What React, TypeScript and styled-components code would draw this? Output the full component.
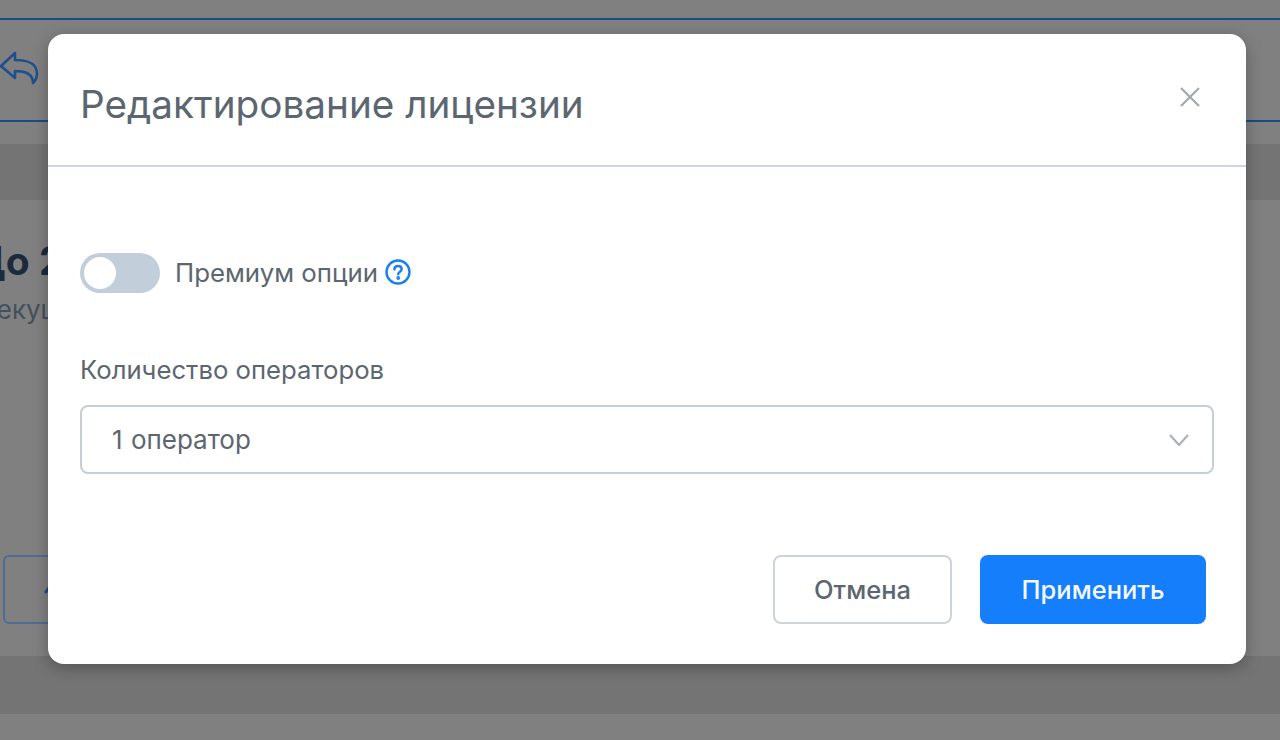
import styled, { createGlobalStyle } from "styled-components";

const GlobalStyle = createGlobalStyle`
  html, body {
    margin: 0;
    padding: 0;
    height: 740px;
    overflow: hidden;
    background: #808080;
    font-family: Inter, "Noto Sans", sans-serif;
  }
  * { box-sizing: border-box; }
`;

const Screen = styled.div`
  position: relative;
  width: 1280px;
  height: 740px;
  overflow: hidden;
  display: flex;
  flex-direction: column;
`;

/* page behind the dimmed overlay */
const TopArea = styled.div`
  height: 144px;
  padding-top: 18px;
  background: #808080;
`;

const NavBar = styled.div`
  height: 104px;
  display: flex;
  align-items: center;
  padding: 0 0 4px 0;
  border-top: 2px solid #1c4a85;
  border-bottom: 2px solid #1c4a85;
  color: #1f4f8c;
`;

const Band = styled.div<{ $h: number }>`
  height: ${(p) => p.$h}px;
  background: #747475;
`;

const PageCard = styled.div`
  height: 456px;
  background: #808080;
  padding: 38px 0 32px 3px;
  display: flex;
  flex-direction: column;
`;

const CardTitle = styled.div`
  margin-left: -31px;
  font-size: 39px;
  line-height: 46px;
  font-weight: 700;
  color: #1c2a3d;
  white-space: nowrap;
`;

const CardText = styled.div`
  margin: 12px 0 0 -21px;
  font-size: 26px;
  line-height: 28px;
  color: #44505e;
  white-space: nowrap;
`;

const OutlineButton = styled.div`
  margin-top: auto;
  width: 120px;
  height: 69px;
  border: 2px solid #4f6d94;
  border-radius: 6px;
  display: flex;
  align-items: center;
  padding-left: 39px;
  color: #1c4a85;
`;

const BottomArea = styled.div`
  flex: 1;
  background: #808080;
`;

/* modal */
const Overlay = styled.div`
  position: absolute;
  inset: 0;
  padding: 34px 34px 0 48px;
`;

const Modal = styled.div`
  width: 1198px;
  height: 630px;
  background: #fff;
  border-radius: 16px;
  box-shadow: 0 4px 16px rgba(0, 0, 0, 0.28);
  display: flex;
  flex-direction: column;
`;

const ModalHeader = styled.div`
  height: 133px;
  flex: none;
  display: flex;
  justify-content: space-between;
  padding: 46px 44px 0 32px;
  border-bottom: 2px solid #ced5dc;
`;

const Title = styled.h1`
  margin: 0;
  font-size: 38.7px;
  line-height: 48px;
  font-weight: 400;
  color: #5c6670;
`;

const CloseButton = styled.div`
  width: 24px;
  height: 24px;
  margin-top: 5px;
  color: #a3a8ad;
`;

const ModalBody = styled.div`
  flex: 1;
  display: flex;
  flex-direction: column;
  padding: 86px 32px 40px;
`;

const ToggleRow = styled.div`
  display: flex;
  align-items: center;
  height: 40px;
`;

const Toggle = styled.div`
  width: 80px;
  height: 40px;
  border-radius: 20px;
  background: #c3cedb;
  padding: 4px;
  margin-right: 15px;
`;

const ToggleKnob = styled.div`
  width: 32px;
  height: 32px;
  border-radius: 50%;
  background: #fff;
`;

const RowLabel = styled.span`
  font-size: 25.8px;
  line-height: 32px;
  color: #5c6670;
`;

const HelpIcon = styled.div`
  width: 26px;
  height: 26px;
  margin: 0 0 2px 7px;
  color: #1a7fef;
`;

const FieldLabel = styled.div`
  margin-top: 61px;
  font-size: 25.7px;
  line-height: 32px;
  color: #5c6670;
`;

const Select = styled.div`
  margin-top: 19px;
  width: 1134px;
  height: 69px;
  border: 2px solid #c6ced6;
  border-radius: 8px;
  display: flex;
  align-items: center;
  justify-content: space-between;
  padding: 0 23px 0 30px;
  font-size: 26px;
  word-spacing: 1px;
  color: #5c6670;
`;

const Chevron = styled.div`
  width: 20px;
  height: 12px;
  color: #a9aeb3;
  display: flex;
`;

const Actions = styled.div`
  margin-top: auto;
  padding-right: 8px;
  display: flex;
  justify-content: flex-end;
  gap: 28px;
`;

const Button = styled.button<{ $primary?: boolean }>`
  height: 69px;
  width: ${(p) => (p.$primary ? 226 : 179)}px;
  border-radius: 8px;
  border: ${(p) => (p.$primary ? "none" : "2px solid #cdd3d9")};
  background: ${(p) => (p.$primary ? "#157ffb" : "#fff")};
  color: ${(p) => (p.$primary ? "#f4f9ff" : "#5c6670")};
  font: 500 25.5px Inter, "Noto Sans", sans-serif;
  padding: 0;
`;

export default function App() {
  return (
    <Screen>
      <GlobalStyle />
      <TopArea>
        <NavBar>
          <svg width="40" height="36" viewBox="0 0 40 36" fill="none" stroke="currentColor" strokeWidth="2.6" strokeLinejoin="round" strokeLinecap="round">
            <path d="M1 16 L15 3 V10 C28 10 37 13 37 24 C37 28 36 30 33 33 C33 25 27 21 15 21 V28 Z" />
          </svg>
        </NavBar>
      </TopArea>
      <Band $h={56} />
      <PageCard>
        <CardTitle>До 2</CardTitle>
        <CardText>Текущая</CardText>
        <OutlineButton>
          <svg width="16" height="24" viewBox="0 0 16 24" fill="none" stroke="currentColor" strokeWidth="3" strokeLinecap="round">
            <path d="M2 14 L6 8" />
          </svg>
        </OutlineButton>
      </PageCard>
      <Band $h={58} />
      <BottomArea />
      <Overlay>
        <Modal>
          <ModalHeader>
            <Title>Редактирование лицензии</Title>
            <CloseButton>
              <svg width="24" height="24" viewBox="0 0 24 24" fill="none" stroke="currentColor" strokeWidth="2.2">
                <path d="M3 3 L21 21 M21 3 L3 21" />
              </svg>
            </CloseButton>
          </ModalHeader>
          <ModalBody>
            <ToggleRow>
              <Toggle>
                <ToggleKnob />
              </Toggle>
              <RowLabel>Премиум опции</RowLabel>
              <HelpIcon>
                <svg width="26" height="26" viewBox="0 0 26 26" fill="none" stroke="currentColor" strokeWidth="2.4" strokeLinecap="round">
                  <circle cx="13" cy="13" r="11.5" />
                  <path d="M9.4 10.4 C9.4 8.2 11 7 13 7 C15.2 7 16.7 8.3 16.7 10.2 C16.7 12.6 13.2 12.8 13.2 15.2" />
                  <circle cx="13.2" cy="19" r="0.7" fill="currentColor" />
                </svg>
              </HelpIcon>
            </ToggleRow>
            <FieldLabel>Количество операторов</FieldLabel>
            <Select>
              <span>1 оператор</span>
              <Chevron>
                <svg width="20" height="12" viewBox="0 0 20 12" fill="none" stroke="currentColor" strokeWidth="2">
                  <path d="M1 1 L10 11 L19 1" />
                </svg>
              </Chevron>
            </Select>
            <Actions>
              <Button>Отмена</Button>
              <Button $primary>Применить</Button>
            </Actions>
          </ModalBody>
        </Modal>
      </Overlay>
    </Screen>
  );
}
